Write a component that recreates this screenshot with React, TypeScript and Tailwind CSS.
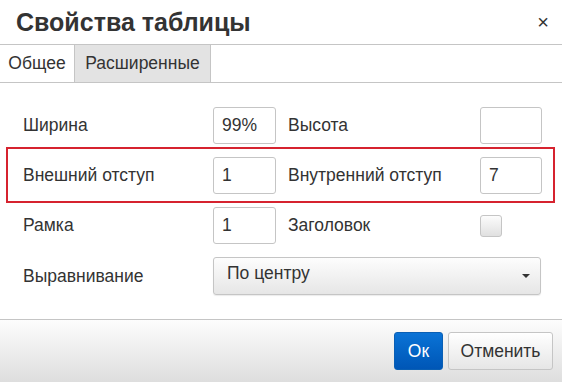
import { useState } from 'react';

function TextInput({ value }: { value: string }) {
    return (
        <input
            defaultValue={value}
            className="h-[37px] w-full rounded-[3px] border border-[#c5c5c5] bg-white px-[8px] text-[17.5px] text-[#333] outline-none"
        />
    );
}

export default function App() {
    const [tab, setTab] = useState<'general' | 'advanced'>('general');

    return (
        <div
            className="flex h-[382px] w-[562px] flex-col overflow-hidden bg-white text-[#333]"
            style={{ fontFamily: '"Liberation Sans", Arial, sans-serif' }}
        >
            {/* Header */}
            <div className="flex h-[45px] shrink-0 items-center justify-between border-b border-[#c5c5c5] pl-[16px] pr-[13px]">
                <h1 className="text-[25px] font-bold leading-none">Свойства таблицы</h1>
                <button className="text-[20px] leading-none text-[#333]">×</button>
            </div>

            {/* Tabs */}
            <div className="flex h-[38px] shrink-0 border-b border-[#c5c5c5]">
                <button
                    onClick={() => setTab('general')}
                    className={`w-[74px] text-[17.5px] ${tab === 'general' ? 'bg-white' : 'bg-[#e3e3e3]'}`}
                >
                    Общее
                </button>
                <button
                    onClick={() => setTab('advanced')}
                    className={`w-[137px] border-x border-[#c5c5c5] text-[17.5px] ${tab === 'advanced' ? 'bg-white' : 'bg-[#e3e3e3]'}`}
                >
                    Расширенные
                </button>
            </div>

            {/* Form */}
            <div className="flex flex-1 flex-col pt-[24px] text-[17.5px]">
                <div className="grid grid-cols-[190px_63px_12px_192px_62px] items-center pl-[23px]">
                    <span>Ширина</span>
                    <TextInput value="99%" />
                    <span />
                    <span>Высота</span>
                    <TextInput value="" />
                </div>

                <div className="mx-[6px] mb-[4px] mt-[3px] w-[549px] border-2 border-[#d6232f] pb-[7px] pl-[15px] pt-[8px]">
                    <div className="grid grid-cols-[190px_63px_12px_192px_62px] items-center">
                        <span>Внешний отступ</span>
                        <TextInput value="1" />
                        <span />
                        <span>Внутренний отступ</span>
                        <TextInput value="7" />
                    </div>
                </div>

                <div className="grid grid-cols-[190px_63px_12px_192px_62px] items-center pl-[23px]">
                    <span>Рамка</span>
                    <TextInput value="1" />
                    <span />
                    <span>Заголовок</span>
                    <div className="flex">
                        <span className="h-[22px] w-[22px] rounded-[3px] border border-[#c5c5c5] bg-gradient-to-b from-[#fcfcfc] to-[#e0e0e0]" />
                    </div>
                </div>

                <div className="mt-[13px] grid grid-cols-[190px_328px] items-center pl-[23px]">
                    <span>Выравнивание</span>
                    <div className="flex h-[38px] items-center justify-between rounded-[3px] border border-[#c5c5c5] bg-gradient-to-b from-[#fdfdfd] to-[#e6e6e6] pb-[5px] pl-[13px] pr-[10px] shadow-[0_1px_1px_rgba(0,0,0,0.08)]">
                        <span>По центру</span>
                        <span className="mt-[5px] h-0 w-0 border-x-[4px] border-t-[4px] border-x-transparent border-t-[#333]" />
                    </div>
                </div>
            </div>

            {/* Footer */}
            <div className="flex h-[63px] shrink-0 items-center justify-end gap-[5px] border-t border-[#c5c5c5] bg-gradient-to-b from-[#fdfdfd] to-[#dedede] pr-[9px]">
                <button className="h-[38px] w-[49px] rounded-[3px] border border-[#0a5fb4] bg-gradient-to-b from-[#0b73d6] to-[#0056b6] text-[17.5px] text-white">
                    Ок
                </button>
                <button className="h-[38px] w-[105px] rounded-[3px] border border-[#c5c5c5] bg-gradient-to-b from-[#ffffff] to-[#e6e6e6] text-[17.5px] text-[#333]">
                    Отменить
                </button>
            </div>
        </div>
    );
}
